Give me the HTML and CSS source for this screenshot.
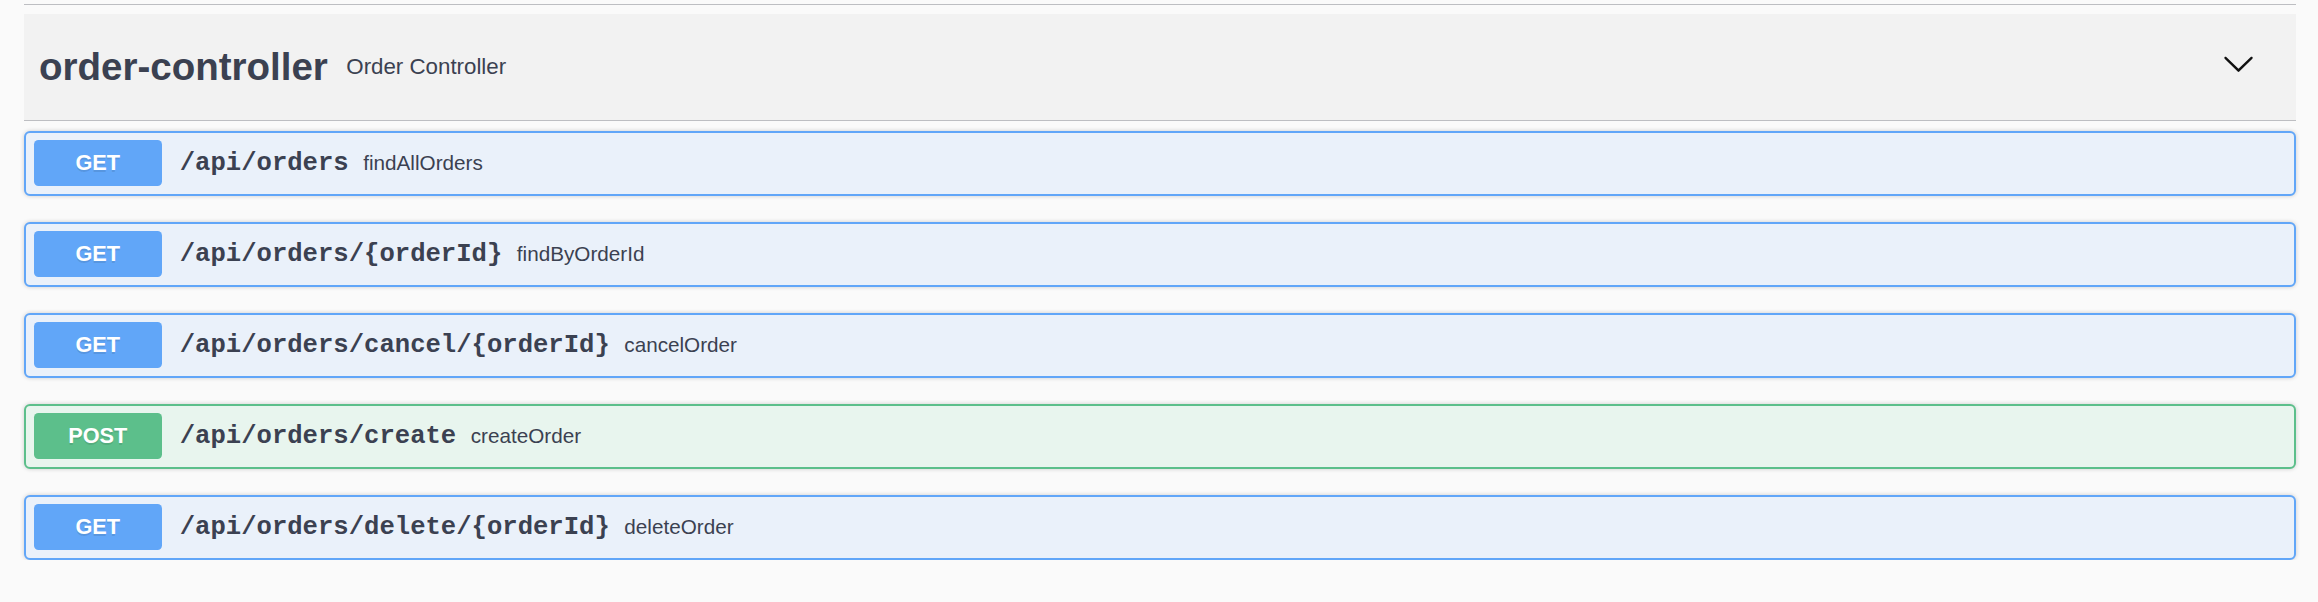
FILE: index.html
```html
<!DOCTYPE html>
<html lang="en">
<head>
<meta charset="utf-8">
<title>order-controller</title>
<link rel="stylesheet" href="styles.css">
</head>
<body>
<div class="swagger">
  <div class="prev-tag"></div>
  <section class="tag-section">
    <h3 class="opblock-tag">
      <a class="tag-name">order-controller</a>
      <small class="tag-desc">Order Controller</small>
      <button class="expand" aria-label="Collapse operation">
        <svg class="arrow" viewBox="0 0 20 20" width="33" height="33" aria-hidden="true">
          <path d="M17.418 6.109c.272-.268.709-.268.979 0s.271.701 0 .969l-7.908 7.83c-.27.268-.707.268-.979 0l-7.908-7.830c-.27-.268-.27-.701 0-.969.271-.268.709-.268.979 0L10 13.25l7.418-7.141z"/>
        </svg>
      </button>
    </h3>
    <div class="operations">
      <div class="opblock opblock-get">
        <span class="method">GET</span>
        <span class="path">/api/orders</span>
        <span class="summary">findAllOrders</span>
      </div>
      <div class="opblock opblock-get">
        <span class="method">GET</span>
        <span class="path">/api/orders/{orderId}</span>
        <span class="summary">findByOrderId</span>
      </div>
      <div class="opblock opblock-get">
        <span class="method">GET</span>
        <span class="path">/api/orders/cancel/{orderId}</span>
        <span class="summary">cancelOrder</span>
      </div>
      <div class="opblock opblock-post">
        <span class="method">POST</span>
        <span class="path">/api/orders/create</span>
        <span class="summary">createOrder</span>
      </div>
      <div class="opblock opblock-get">
        <span class="method">GET</span>
        <span class="path">/api/orders/delete/{orderId}</span>
        <span class="summary">deleteOrder</span>
      </div>
    </div>
  </section>
</div>
</body>
</html>
```
FILE: styles.css
```css
html, body {
  margin: 0;
  padding: 0;
  background: #fafafa;
}

body {
  font-family: "Liberation Sans", Arial, Helvetica, sans-serif;
  color: #3b4151;
}

.swagger {
  padding: 4px 22px 0 24px;
}

.prev-tag {
  height: 0;
  border-bottom: 1px solid #bdbec2;
  margin-bottom: 9px;
}

.opblock-tag {
  display: flex;
  align-items: center;
  height: 106px;
  margin: 0 0 9.5px;
  padding: 0 0 0 15px;
  background: #f2f2f2;
  border-bottom: 1px solid #bdbec2;
  font-weight: normal;
}

.tag-name {
  font-size: 38.5px;
  font-weight: 700;
  color: #3b4151;
  line-height: normal;
}

.tag-desc {
  font-size: 22.3px;
  margin-left: 18.5px;
  color: #3b4151;
  line-height: normal;
}

.expand {
  margin: 0 41.5px 7px auto;
  padding: 0;
  border: none;
  background: none;
  display: flex;
}

.arrow {
  display: block;
  fill: #111;
}

.operations {
  display: flex;
  flex-direction: column;
  gap: 25.5px;
}

.opblock {
  display: flex;
  align-items: center;
  padding: 7.75px;
  border: 2px solid #61a6f8;
  border-radius: 6px;
  box-shadow: 0 0 4px rgba(0, 0, 0, 0.19);
  background: #eaf1fa;
}

.opblock-post {
  border-color: #5cbf8b;
  background: #e8f5ee;
}

.method {
  width: 128px;
  height: 46px;
  line-height: 46px;
  text-align: center;
  border-radius: 4.5px;
  background: #61a6f8;
  color: #fff;
  font-size: 21.7px;
  font-weight: 700;
  text-shadow: 0 1.5px 0 rgba(0, 0, 0, 0.1);
  flex: none;
}

.opblock-post .method {
  background: #5cbf8b;
}

.path {
  margin-left: 18px;
  font-family: "Liberation Mono", "Courier New", monospace;
  font-weight: 700;
  font-size: 25.6px;
  color: #3b4151;
}

.summary {
  margin-left: 14.5px;
  font-size: 20.7px;
  color: #3b4151;
}
```
